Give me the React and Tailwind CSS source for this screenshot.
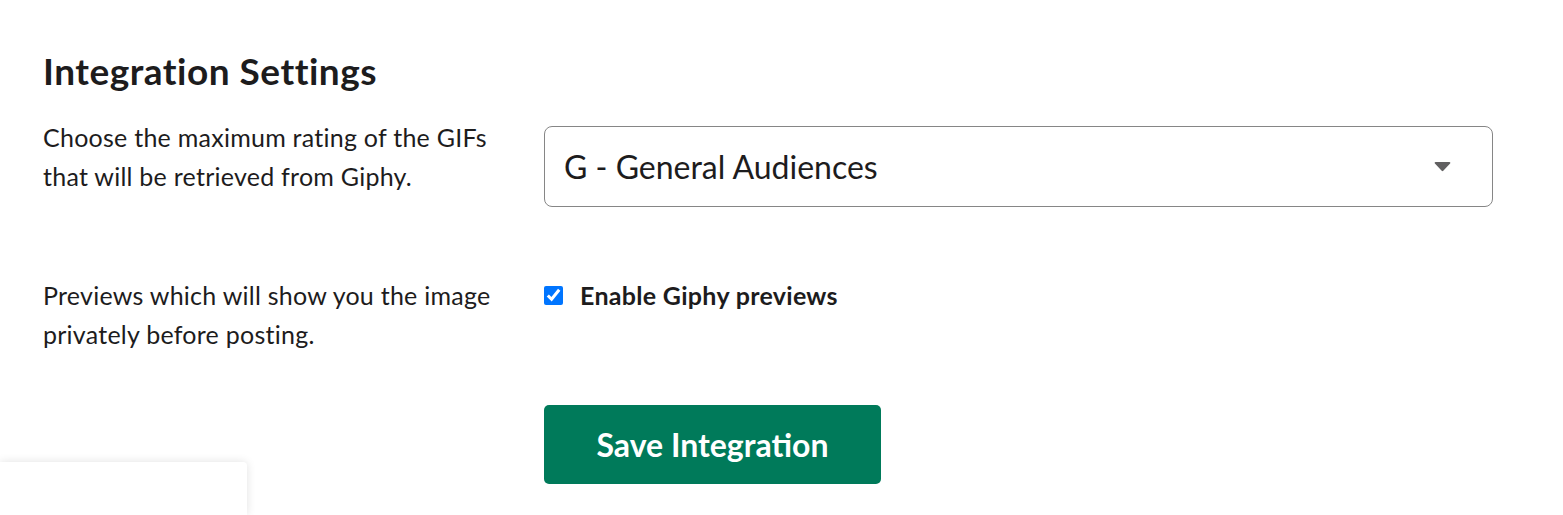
import React from "react";

export default function App() {
  return (
    <div className="relative h-[515px] w-full overflow-hidden bg-white text-[#1d1c1d]" style={{ fontFamily: "Lato, 'Noto Sans', sans-serif" }}>
      <div className="px-[43px] pt-[51px]">
        <h2 className="text-[37px] font-bold leading-[40px] tracking-[0.5px]">Integration Settings</h2>

        <div className="mt-[27px] flex items-start">
          <p className="w-[501px] shrink-0 pr-[31px] text-[25px] leading-[39px] tracking-[0.25px]">
            Choose the maximum rating of the GIFs that will be retrieved from Giphy.
          </p>
          <div className="mt-[8px] flex h-[81px] w-[949px] items-center justify-between rounded-[8px] border border-[#868686] pl-[19px] pr-[41px]">
            <span className="text-[32px]">G - General Audiences</span>
            <svg width="17" height="11" viewBox="0 0 17 11">
              <path d="M1.6 1h13.8c.9 0 1.3 1 .7 1.6L9.3 9.8a1.1 1.1 0 0 1-1.6 0L.9 2.6C.3 2 .7 1 1.6 1z" fill="#616061" />
            </svg>
          </div>
        </div>

        <div className="mt-[69px] flex items-start">
          <p className="w-[501px] shrink-0 pr-[31px] text-[25px] leading-[39px] tracking-[0.25px]">
            Previews which will show you the image privately before posting.
          </p>
          <label className="flex items-center gap-[17px]">
            <input type="checkbox" defaultChecked className="m-0 h-[19px] w-[19px]" />
            <span className="text-[25px] font-bold leading-[39px] tracking-[0.3px]">Enable Giphy previews</span>
          </label>
        </div>

        <div className="ml-[501px] mt-[51px]">
          <button className="flex h-[79px] w-[337px] items-center justify-center rounded-[5px] bg-[#007a5a] text-[32px] font-bold text-white">
            Save Integration
          </button>
        </div>
      </div>

      <div className="absolute bottom-0 left-0 h-[53px] w-[247px] rounded-tr-[4px] bg-white shadow-[0_0_10px_rgba(0,0,0,0.12)]" />
    </div>
  );
}
